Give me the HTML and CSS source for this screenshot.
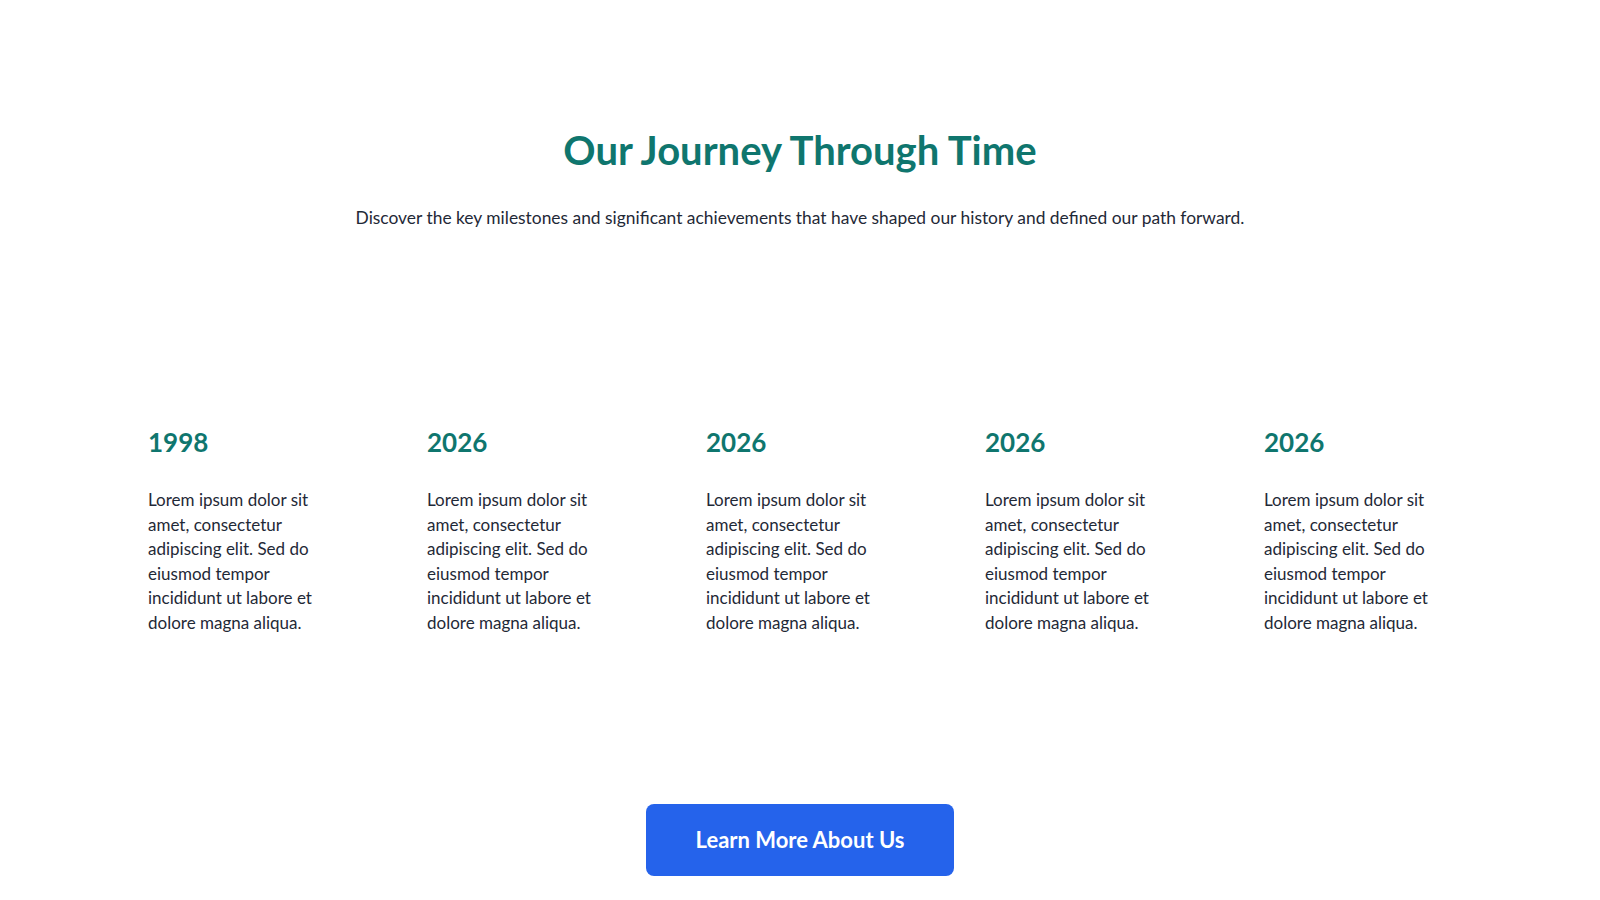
FILE: index.html
```html
<!DOCTYPE html>
<html lang="en">
<head>
  <meta charset="UTF-8">
  <meta name="viewport" content="width=device-width, initial-scale=1.0">
  <title>Our Journey Through Time</title>
  <link rel="stylesheet" href="styles.css">
</head>
<body>
  <section class="journey">
    <header class="journey-header">
      <h1>Our Journey Through Time</h1>
      <p>Discover the key milestones and significant achievements that have shaped our history and defined our path forward.</p>
    </header>

    <div class="timeline">
      <div class="milestone">
        <h3>1998</h3>
        <p>Lorem ipsum dolor sit amet, consectetur adipiscing elit. Sed do eiusmod tempor incididunt ut labore et dolore magna aliqua.</p>
      </div>
      <div class="milestone">
        <h3>2026</h3>
        <p>Lorem ipsum dolor sit amet, consectetur adipiscing elit. Sed do eiusmod tempor incididunt ut labore et dolore magna aliqua.</p>
      </div>
      <div class="milestone">
        <h3>2026</h3>
        <p>Lorem ipsum dolor sit amet, consectetur adipiscing elit. Sed do eiusmod tempor incididunt ut labore et dolore magna aliqua.</p>
      </div>
      <div class="milestone">
        <h3>2026</h3>
        <p>Lorem ipsum dolor sit amet, consectetur adipiscing elit. Sed do eiusmod tempor incididunt ut labore et dolore magna aliqua.</p>
      </div>
      <div class="milestone">
        <h3>2026</h3>
        <p>Lorem ipsum dolor sit amet, consectetur adipiscing elit. Sed do eiusmod tempor incididunt ut labore et dolore magna aliqua.</p>
      </div>
    </div>

    <div class="cta">
      <a href="#" class="cta-button">Learn More About Us</a>
    </div>
  </section>
</body>
</html>
```

FILE: styles.css
```css
body {
  font-family: Lato, 'Noto Sans', sans-serif;
  background-color: #fff;
  color: #1f2937;
  margin: 0;
  padding: 0;
}

.journey {
  max-width: 1600px;
  margin: 0 auto;
  padding: 125px 0 0;
}

.journey-header {
  text-align: center;
}

.journey-header h1 {
  font-size: 40px;
  line-height: 50px;
  font-weight: 700;
  color: #0f766e;
  margin: 0;
}

.journey-header p {
  font-size: 17.4px;
  line-height: 26px;
  margin: 30px 0 0;
}

.timeline {
  display: grid;
  grid-template-columns: repeat(5, 279px);
  padding: 0 0 0 148px;
  margin-top: 194px;
}

.milestone h3 {
  font-size: 26px;
  line-height: 34px;
  font-weight: 700;
  color: #0f766e;
  margin: 0;
}

.milestone p {
  max-width: 175px;
  font-size: 17px;
  line-height: 24.6px;
  margin: 29px 0 0;
}

.cta {
  display: flex;
  justify-content: center;
  margin-top: 168px;
}

.cta-button {
  display: flex;
  align-items: center;
  justify-content: center;
  width: 308px;
  height: 72px;
  background-color: #2563eb;
  color: #fff;
  font-size: 22px;
  font-weight: 700;
  text-decoration: none;
  border-radius: 8px;
}
```
